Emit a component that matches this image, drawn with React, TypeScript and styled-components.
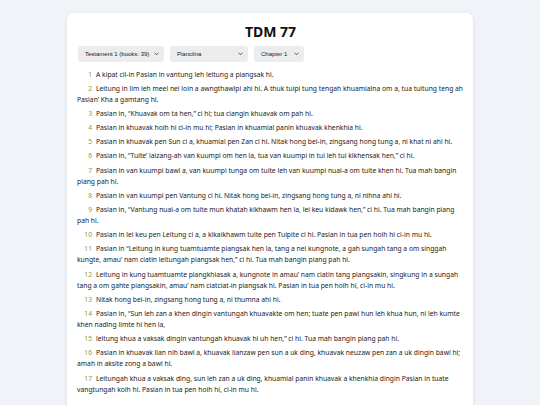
import React from "react";
import styled, { createGlobalStyle } from "styled-components";

const Global = createGlobalStyle`
  html, body { margin: 0; padding: 0; background: #f0f4f8; }
  body { font-family: "Noto Sans", "Open Sans", sans-serif; color: #222; }
`;

const Page = styled.div`
  padding-top: 13px;
  padding-bottom: 16px;
`;

const Card = styled.div`
  width: 406px;
  margin: 0 auto;
  box-sizing: border-box;
  background: #fff;
  border-radius: 7px;
  box-shadow: 0 1px 5px rgba(0, 0, 0, 0.08);
  padding: 10px 9px 30px 10px;
`;

const Title = styled.h1`
  margin: 0;
  text-align: center;
  font-family: "Noto Sans", sans-serif;
  font-size: 14px;
  line-height: 18px;
  font-weight: 700;
  color: #111;
`;

const Controls = styled.div`
  display: flex;
  gap: 6px;
  margin: 5px 0 6.5px 1px;
`;

const SelectWrap = styled.div<{ $w: number }>`
  position: relative;
  display: flex;
  width: ${(p) => p.$w}px;
  height: 16px;
`;

const Select = styled.select`
  appearance: none;
  -webkit-appearance: none;
  display: block;
  box-sizing: border-box;
  width: 100%;
  height: 16px;
  margin: 0;
  border: none;
  border-radius: 3px;
  background: #ececec;
  color: #222;
  font-family: "Liberation Sans", Arial, sans-serif;
  font-size: 6px;
  padding: 0 0 0 7px;
  outline: none;
`;

const Chevron = styled.svg`
  position: absolute;
  right: 5px;
  top: 6px;
  width: 5px;
  height: 4px;
  pointer-events: none;
`;

const Verses = styled.div`
  display: flex;
  flex-direction: column;
  gap: 3.2px;
`;

const Verse = styled.p`
  margin: 0;
  font-size: 6.75px;
  line-height: 11px;
  color: #222;
`;

const Num = styled.span`
  display: inline-block;
  width: 15px;
  margin-right: 4px;
  text-align: right;
  color: #8f9a3a;
`;

const verses: string[] = [
  "A kipat cil-in Pasian in vantung leh leitung a piangsak hi.",
  "Leitung in lim leh meel nei loin a awngthawlpi ahi hi. A thuk tuipi tung tengah khuamialna om a, tua tuitung teng ah Pasian’ Kha a gamtang hi.",
  "Pasian in, “Khuavak om ta hen,” ci hi; tua ciangin khuavak om pah hi.",
  "Pasian in khuavak hoih hi ci-in mu hi; Pasian in khuamial panin khuavak khenkhia hi.",
  "Pasian in khuavak pen Sun ci a, khuamial pen Zan ci hi. Nitak hong bei-in, zingsang hong tung a, ni khat ni ahi hi.",
  "Pasian in, “Tuite’ laizang-ah van kuumpi om hen la, tua van kuumpi in tui leh tui kikhensak hen,” ci hi.",
  "Pasian in van kuumpi bawl a, van kuumpi tunga om tuite leh van kuumpi nuai-a om tuite khen hi. Tua mah bangin piang pah hi.",
  "Pasian in van kuumpi pen Vantung ci hi. Nitak hong bei-in, zingsang hong tung a, ni nihna ahi hi.",
  "Pasian in, “Vantung nuai-a om tuite mun khatah kikhawm hen la, lei keu kidawk hen,” ci hi. Tua mah bangin piang pah hi.",
  "Pasian in lei keu pen Leitung ci a, a kikaikhawm tuite pen Tuipite ci hi. Pasian in tua pen hoih hi ci-in mu hi.",
  "Pasian in “Leitung in kung tuamtuamte piangsak hen la, tang a nei kungnote, a gah sungah tang a om singgah kungte, amau’ nam ciatin leitungah piangsak hen,” ci hi. Tua mah bangin piang pah hi.",
  "Leitung in kung tuamtuamte piangkhiasak a, kungnote in amau’ nam ciatin tang piangsakin, singkung in a sungah tang a om gahte piangsakin, amau’ nam ciatciat-in piangsak hi. Pasian in tua pen hoih hi, ci-in mu hi.",
  "Nitak hong bei-in, zingsang hong tung a, ni thumna ahi hi.",
  "Pasian in, “Sun leh zan a khen dingin vantungah khuavakte om hen; tuate pen pawi hun leh khua hun, ni leh kumte khen nading limte hi hen la,",
  "leitung khua a vaksak dingin vantungah khuavak hi uh hen,” ci hi. Tua mah bangin piang pah hi.",
  "Pasian in khuavak lian nih bawl a, khuavak lianzaw pen sun a uk ding, khuavak neuzaw pen zan a uk dingin bawl hi; amah in aksite zong a bawl hi.",
  "Leitungah khua a vaksak ding, sun leh zan a uk ding, khuamial panin khuavak a khenkhia dingin Pasian in tuate vangtungah koih hi. Pasian in tua pen hoih hi, ci-in mu hi.",
];

const ChevronIcon = () => (
  <Chevron viewBox="0 0 10 8">
    <path d="M1.5 2 L5 5.5 L8.5 2" fill="none" stroke="#333" strokeWidth="1.6" strokeLinecap="round" strokeLinejoin="round" />
  </Chevron>
);

export default function App() {
  return (
    <Page>
      <Global />
      <Card>
        <Title>TDM 77</Title>
        <Controls>
          <SelectWrap $w={86}>
            <Select defaultValue="1">
              <option value="1">Testament 1 (books: 39)</option>
              <option value="2">Testament 2 (books: 27)</option>
            </Select>
            <ChevronIcon />
          </SelectWrap>
          <SelectWrap $w={78}>
            <Select defaultValue="p">
              <option value="p">Piancilna</option>
            </Select>
            <ChevronIcon />
          </SelectWrap>
          <SelectWrap $w={50}>
            <Select defaultValue="1">
              <option value="1">Chapter 1</option>
              <option value="2">Chapter 2</option>
            </Select>
            <ChevronIcon />
          </SelectWrap>
        </Controls>
        <Verses>
          {verses.map((v, i) => (
            <Verse key={i}>
              <Num>{i + 1}</Num>
              {v}
            </Verse>
          ))}
        </Verses>
      </Card>
    </Page>
  );
}
